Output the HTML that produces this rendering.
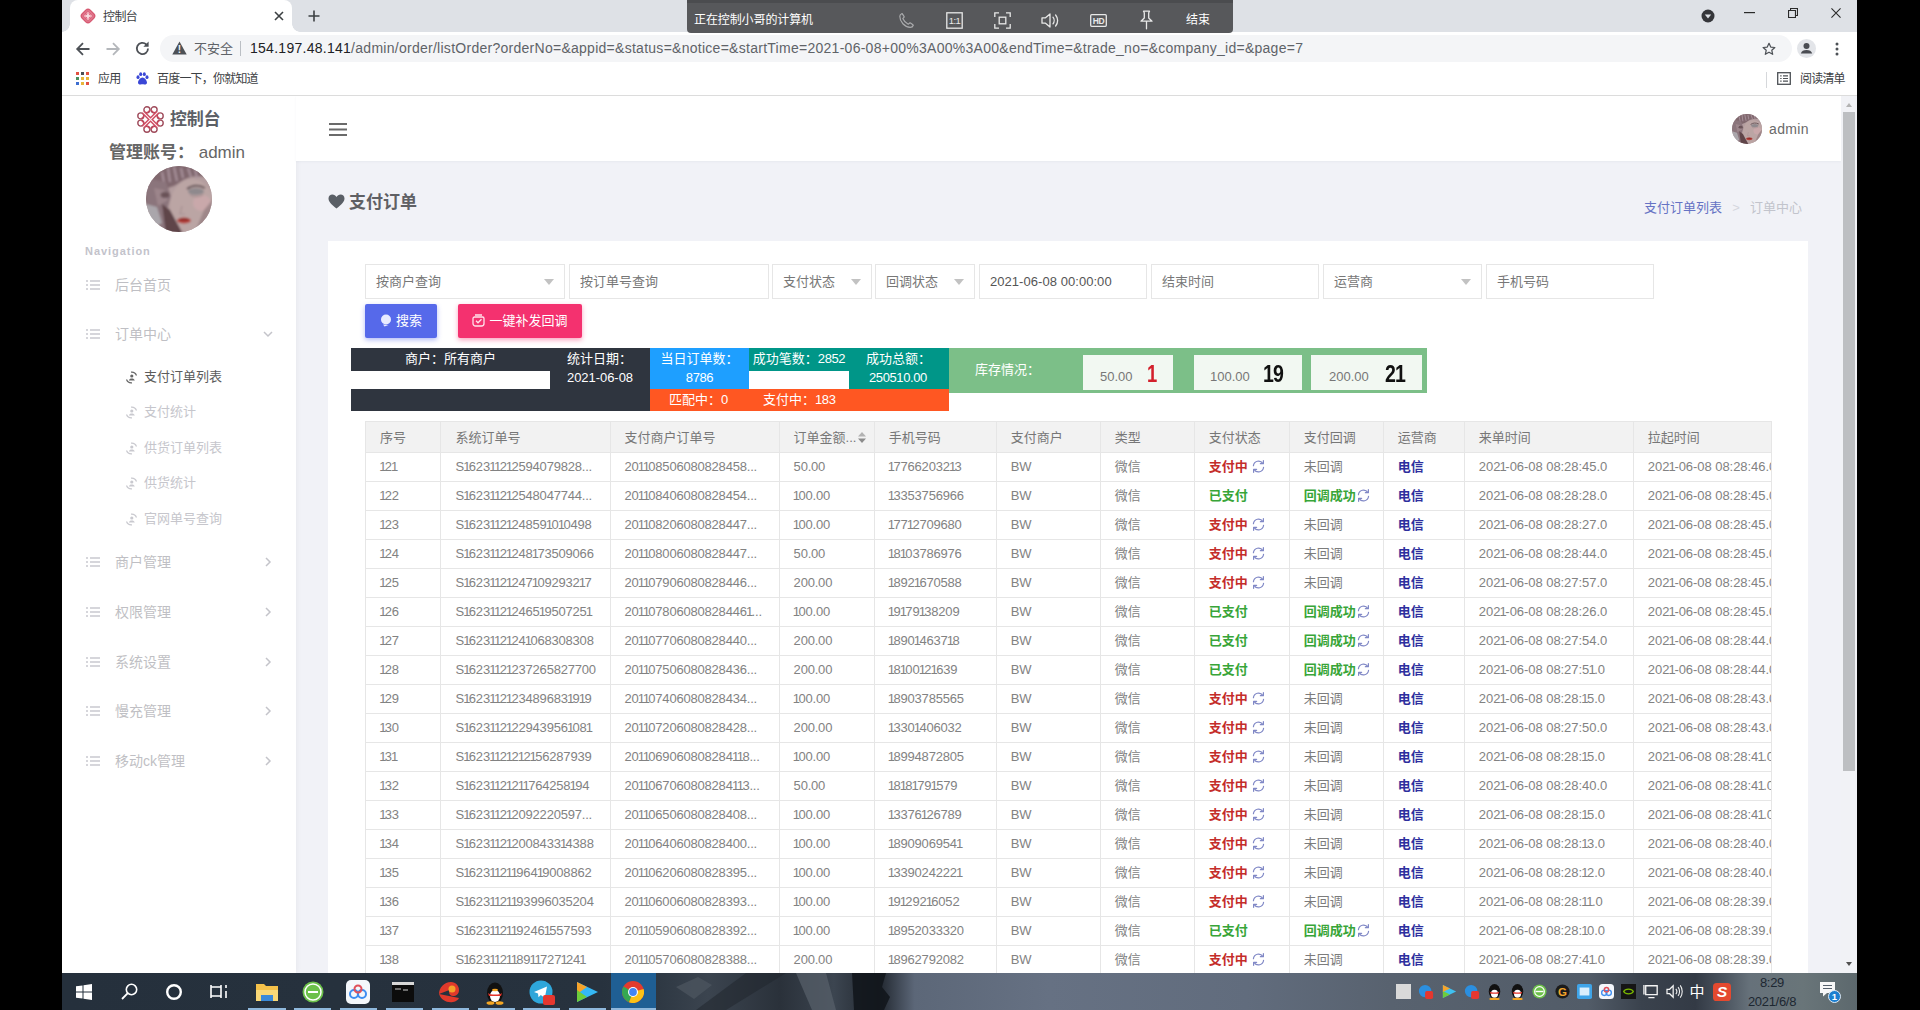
<!DOCTYPE html>
<html lang="zh-CN">
<head>
<meta charset="utf-8">
<title>控制台</title>
<style>
*{box-sizing:border-box}
html,body{margin:0;padding:0;background:#000}
body{width:1920px;height:1010px;overflow:hidden;font-family:"Liberation Sans","Noto Sans CJK SC",sans-serif;font-size:13px;color:#666}
#root{position:relative;width:1920px;height:1010px;background:#000;overflow:hidden}
.abs{position:absolute}
svg{display:block}
/* ---------- browser chrome ---------- */
#tabstrip{position:absolute;left:62px;top:0;width:1795px;height:32px;background:#dee1e6}
#tab{position:absolute;left:8px;top:0;width:222px;height:32px;background:#fff;border-radius:8px 8px 0 0}
#tab .fav{position:absolute;left:18px;top:8px}
#tab:before,#tab:after{content:'';position:absolute;bottom:0;width:8px;height:8px}
#tab:before{left:-8px;background:radial-gradient(circle at 0 0,rgba(255,255,255,0) 7.500px,#fff 8px)}
#tab:after{right:-8px;background:radial-gradient(circle at 100% 0,rgba(255,255,255,0) 7.500px,#fff 8px)}
#tab .tt{position:absolute;left:33px;top:9px;font-size:12px;line-height:16px;color:#3c4043;letter-spacing:-.6px}
#tab .x{position:absolute;left:204px;top:9px}
#newtab{position:absolute;left:245px;top:9px}
#rc{position:absolute;z-index:5;left:687px;top:0;width:546px;height:33px;background:#57585b;border-radius:0 0 4px 4px;border-top:3px solid #4b4c4f;color:#fff}
#rc .t{position:absolute;left:7px;top:9px;font-size:12px;line-height:16px;letter-spacing:-.1px}
#rc .e{position:absolute;left:499px;top:9px;font-size:12px;line-height:16px}
#rc svg{position:absolute;margin-top:1px}
#wc svg{position:absolute}
#toolbar{position:absolute;left:62px;top:32px;width:1795px;height:33px;background:#fff}
#omni{position:absolute;left:98px;top:3px;width:1632px;height:27px;border-radius:14px;background:#f4f5f7}
#omni .ns{position:absolute;left:34px;top:5px;font-size:13px;line-height:17px;color:#5f6368}
#omni .sep{position:absolute;left:80px;top:6px;width:1px;height:15px;background:#bbbfc4}
#omni .url{position:absolute;left:90px;top:4px;font-size:14px;line-height:18px;color:#5f6368;white-space:nowrap;letter-spacing:.27px}
#omni .url b{font-weight:normal;color:#202124}
#toolbar svg{position:absolute}
#bm{position:absolute;left:62px;top:65px;width:1795px;height:31px;background:#fff;border-bottom:1px solid #dcdcdc;font-size:12px;color:#3c4043}
#bm span{position:absolute;top:6px;line-height:16px;white-space:nowrap;letter-spacing:-.8px}
#bm svg{position:absolute}
/* ---------- page ---------- */
#page{position:absolute;left:62px;top:96px;width:1779px;height:877px;background:#f1f2f7;overflow:hidden}
#side{position:absolute;left:0;top:0;width:234px;height:877px;background:#fff;box-shadow:0 0 6px rgba(0,0,0,.06)}
#side .brand{position:absolute;left:108px;top:12px;font-size:17px;line-height:24px;font-weight:bold;color:#5c6066;white-space:nowrap;letter-spacing:-.3px}
#side .logo{position:absolute;left:74px;top:9px}
#side .acct{position:absolute;left:-2px;top:45px;width:234px;text-align:center;font-size:17px;line-height:24px;color:#666;white-space:nowrap}
#side .acct b{font-weight:bold}
#side .av{position:absolute;left:84px;top:70px;width:66px;height:66px;border-radius:50%;overflow:hidden}
#side .nav{position:absolute;left:23px;top:148px;font-size:11px;line-height:14px;font-weight:bold;color:#c3c3cb;letter-spacing:.95px}
#side .mi{position:absolute;left:0;width:234px;height:20px;font-size:14px;line-height:20px;color:#bfbfc4}
#side .mi .ic{position:absolute;left:24px;top:5px}
#side .mi .tx{position:absolute;left:53px;top:0;white-space:nowrap}
#side .mi .ar{position:absolute;left:201px;top:5px}
#side .si{position:absolute;left:0;width:234px;height:18px;font-size:13px;line-height:18px;color:#c6c6cc}
#side .si .ic{position:absolute;left:63px;top:3px}
#side .si .tx{position:absolute;left:82px;top:0;white-space:nowrap}
#side .si.on{color:#5c5c5c}
#topbar{position:absolute;left:234px;top:0;width:1545px;height:65px;background:#fff;box-shadow:0 1px 2px rgba(120,125,140,.07)}
#topbar .hb{position:absolute;left:33px;top:27px}
#topbar .av{position:absolute;left:1436px;top:18px;width:30px;height:30px;border-radius:50%;overflow:hidden}
#topbar .nm{position:absolute;left:1473px;top:24px;font-size:14px;line-height:18px;color:#6a6a6a;letter-spacing:.35px}
#ttl{position:absolute;left:266px;top:95px;font-size:17px;line-height:24px;font-weight:bold;color:#5f6064;white-space:nowrap}
#ttl svg{display:inline-block;vertical-align:-1px;margin-right:4px}
#bc{position:absolute;left:1582px;top:103px;font-size:13px;line-height:18px;white-space:nowrap;color:#c2c4cc}
#bc .a{color:#6673c4}
#bc .s{display:inline-block;width:28px;text-align:center;color:#d5d7de}
#card{position:absolute;left:266px;top:145px;width:1480px;height:740px;background:#fff}
.fi{position:absolute;top:23px;height:35px;border:1px solid #e6e6e6;background:#fff;font-size:13px;line-height:33px;color:#777;padding-left:10px;white-space:nowrap;overflow:hidden}
.fi.v{color:#555}
.fi .dd{position:absolute;right:10px;top:14px;width:0;height:0;border:5px solid transparent;border-top:6px solid #c2c2c2}
.btn{position:absolute;top:63px;height:34px;border-radius:2px;color:#fff;font-size:13px;line-height:34px;text-align:center;white-space:nowrap;box-shadow:0 2px 4px rgba(0,0,0,.18)}
.btn svg{display:inline-block;vertical-align:-2px;margin-right:4px}
#st{position:absolute;left:23px;top:107px;width:1100px;height:64px;color:#fff;font-size:13px;line-height:18px}
#st div{position:absolute;white-space:nowrap}
#st .tc{text-align:center}
#tb{position:absolute;left:37px;top:180px;width:1407px;height:560px;overflow:hidden;border-left:1px solid #e6e6e6;border-top:1px solid #e6e6e6;border-right:1px solid #e6e6e6}
#tb table{border-collapse:collapse;table-layout:fixed;width:1437px}
#tb th{height:30px;background:#f2f2f2;font-weight:normal;text-align:left;padding:0 0 1px 14px;border-right:1px solid #e6e6e6;border-bottom:1px solid #e6e6e6;font-size:13px;color:#777;white-space:nowrap;overflow:hidden}
#tb td{height:29px;padding:0 0 2px 14px;border-right:1px solid #e6e6e6;border-bottom:1px solid #e6e6e6;white-space:nowrap;overflow:hidden;font-size:13px;color:#828282}
#tb td.n{letter-spacing:-.2px;padding-bottom:0}
#tb td.c1,#tb th:nth-child(2){padding-left:15px}
#tb td i{font-style:normal;margin:0 -1.4px 0 -.8px}
#tb td.c10,#tb td.c11{letter-spacing:-.05px}
#tb b.ing{color:#c42d2a}
#tb b.ok{color:#38a538}
#tb b.dx{color:#2e2f9e}
#tb .no{color:#7c7c7c}
#tb svg.rf{display:inline-block;vertical-align:-3px}
#sb{position:absolute;left:1841px;top:96px;width:16px;height:877px;background:#f1f2f6}
#sb .th{position:absolute;left:2px;top:16px;width:12px;height:659px;background:#bdbfc2}
#sb .u{position:absolute;left:5px;top:7px;width:0;height:0;border:3px solid transparent;border-bottom:4px solid #b3b3b3;border-top:0}
#sb .d{position:absolute;left:5px;top:866px;width:0;height:0;border:3px solid transparent;border-top:4px solid #505050;border-bottom:0}
/* ---------- taskbar ---------- */
#task{position:absolute;left:62px;top:973px;width:1795px;height:37px;overflow:hidden;background:linear-gradient(90deg,#25303c 0,#27323e 30%,#2d3742 33%,#3b444f 36%,#2a313a 40%,#3c4550 43%,#20262e 45.500%,#5c6778 47.500%,#667183 55%,#616c7d 66%,#58626f 74%,#525c68 85%,#3a424d 88%,#333a45 91%,#4b545f 92.600%,#66717a 94%,#697579 97%,#5c686d 100%)}
#task svg{position:absolute}
#task .ti{position:absolute;top:8px;width:22px;height:22px}
#task .ul{position:absolute;top:35px;height:2px;background:#8fb8dc}
#task .clk{position:absolute;left:1680px;top:1px;width:60px;text-align:center;color:#1d2731;font-size:13px;line-height:17px}

</style>
</head>
<body>
<div id="root">
<div id="tabstrip">
  <div id="tab">
    <svg class="fav" style="left:10px;top:8px" width="16" height="16" viewBox="0 0 16 16"><rect x="2.500" y="2.500" width="11" height="11" rx="3" transform="rotate(45 8 8)" fill="#f0aab6" stroke="#d75a72" stroke-width="1.500"/><path d="M5 5l6 6M11 5l-6 6M8 2.600L13.400 8 8 13.400 2.600 8z" stroke="#d9607a" stroke-width="1.100" fill="none"/><rect x="6.200" y="6.200" width="3.600" height="3.600" transform="rotate(45 8 8)" fill="#f8dde1"/></svg>
    <div class="tt">控制台</div>
    <svg class="x" style="left:204px;top:11px" width="10" height="10" viewBox="0 0 10 10"><path d="M1 1l8 8M9 1l-8 8" stroke="#3c4043" stroke-width="1.6" fill="none"/></svg>
  </div>
  <svg id="newtab" style="left:246px;top:10px" width="12" height="12" viewBox="0 0 12 12"><path d="M6 0.5v11M0.5 6h11" stroke="#3c4043" stroke-width="1.6" fill="none"/></svg>
  <div id="wc">
    <svg style="left:1639px;top:9px" width="14" height="14" viewBox="0 0 14 14"><circle cx="7" cy="7" r="6.5" fill="#35363a"/><path d="M3.8 5.6h6.4L7 9.4z" fill="#dee1e6"/></svg>
    <svg style="left:1682px;top:12px" width="11" height="2" viewBox="0 0 11 2"><rect width="11" height="1.2" fill="#2a2a2a"/></svg>
    <svg style="left:1726px;top:8px" width="10" height="10" viewBox="0 0 11 11"><path d="M0.6 2.8h7.6v7.6H0.6zM2.8 2.8V0.6h7.6v7.6H8.2" fill="none" stroke="#2a2a2a" stroke-width="1.2"/></svg>
    <svg style="left:1769px;top:8px" width="10" height="10" viewBox="0 0 11 11"><path d="M0.5 0.5l10 10M10.5 0.5l-10 10" stroke="#2a2a2a" stroke-width="1.2" fill="none"/></svg>
  </div>
</div>
<div id="rc">
  <div class="t">正在控制小哥的计算机</div>
  <svg style="left:211px;top:8px" width="17" height="17" viewBox="0 0 17 17"><path d="M4 1.5c1 1.2 1.8 2.3 2.3 3.4L4.8 6.6c1 2.4 2.9 4.5 5.4 5.6l1.8-1.4c1.1.6 2.2 1.4 3.3 2.400-.5 1.400-1.500 2.200-3 2.200C6.500 15 1.800 9.800 1.800 4.300c0-1.200.8-2.200 2.200-2.800z" fill="none" stroke="#a9aaac" stroke-width="1.2" stroke-linejoin="round"/></svg>
  <svg style="left:259px;top:8px" width="17" height="17" viewBox="0 0 17 17"><rect x="0.800" y="0.800" width="15.400" height="15.400" fill="none" stroke="#e8e8e8" stroke-width="1.300"/><text x="8.500" y="12" text-anchor="middle" font-size="9.500" letter-spacing="-0.500" fill="#e8e8e8" font-family="Liberation Sans, sans-serif">1:1</text></svg>
  <svg style="left:307px;top:8px" width="17" height="17" viewBox="0 0 17 17"><path d="M0.8 5V0.8H5M12 0.800h4.200V5M16.200 12v4.200H12M5 16.200H0.800V12" fill="none" stroke="#e8e8e8" stroke-width="1.3"/><rect x="5.200" y="5.200" width="6.600" height="6.600" fill="none" stroke="#e8e8e8" stroke-width="1.3"/></svg>
  <svg style="left:354px;top:8px" width="19" height="17" viewBox="0 0 19 17"><path d="M1 5.800h3.500L9 2v13l-4.500-3.800H1z" fill="none" stroke="#e8e8e8" stroke-width="1.3" stroke-linejoin="round"/><path d="M12 5.200c1.500 1.800 1.500 4.800 0 6.600M14.600 3c2.700 3.200 2.700 7.800 0 11" fill="none" stroke="#e8e8e8" stroke-width="1.300" stroke-linecap="round"/></svg>
  <svg style="left:403px;top:10px" width="17" height="13" viewBox="0 0 17 13"><rect x="0.700" y="0.700" width="15.600" height="11.600" rx="1" fill="none" stroke="#e8e8e8" stroke-width="1.300"/><text x="8.500" y="9.700" text-anchor="middle" font-size="8.500" font-weight="bold" letter-spacing="-0.300" fill="#e8e8e8" font-family="Liberation Sans, sans-serif">HD</text></svg>
  <svg style="left:452px;top:6px" width="15" height="20" viewBox="0 0 15 20"><path d="M4.500 1.200h6l-.8 1.500v5.300l3.300 3.200H2l3.300-3.200V2.700zM7.500 11.200v7.600" fill="none" stroke="#e8e8e8" stroke-width="1.300" stroke-linejoin="round" stroke-linecap="round"/></svg>
  <div class="e">结束</div>
</div>
<div id="toolbar">
  <svg style="left:13px;top:9px" width="16" height="16" viewBox="0 0 16 16"><path d="M14.500 8H2.500M8 2.200L2.200 8 8 13.800" fill="none" stroke="#4d5156" stroke-width="1.800"/></svg>
  <svg style="left:43px;top:9px" width="16" height="16" viewBox="0 0 16 16"><path d="M1.500 8h12M8 2.200L13.800 8 8 13.800" fill="none" stroke="#b4b7bb" stroke-width="1.800"/></svg>
  <svg style="left:72px;top:8px" width="17" height="17" viewBox="0 0 17 17"><path d="M14 8.500a5.600 5.600 0 1 1-1.700-4" fill="none" stroke="#4d5156" stroke-width="1.800"/><path d="M14.600 1.500v5.200H9.400z" fill="#4d5156"/></svg>
  <div id="omni">
    <svg style="left:12px;top:6px" width="15" height="14" viewBox="0 0 15 14"><path d="M7.500 0.500L14.700 13.500H0.300z" fill="#4d5156"/><text x="7.500" y="12.300" text-anchor="middle" font-size="10" font-weight="bold" fill="#f4f5f7" font-family="Liberation Sans, sans-serif">!</text></svg>
    <div class="ns">不安全</div>
    <div class="sep"></div>
    <div class="url"><b>154.197.48.141</b>/admin/order/listOrder?orderNo=&amp;appid=&amp;status=&amp;notice=&amp;startTime=2021-06-08+00%3A00%3A00&amp;endTime=&amp;trade_no=&amp;company_id=&amp;page=7</div>
    <svg style="left:1602px;top:7px" width="14" height="14" viewBox="0 0 16 16"><path d="M8 1.500l2 4.300 4.700.5-3.500 3.200 1 4.600L8 11.700l-4.200 2.400 1-4.600L1.300 6.300 6 5.800z" fill="none" stroke="#4d5156" stroke-width="1.400" stroke-linejoin="round"/></svg>
  </div>
  <svg style="left:1735px;top:7px" width="19" height="19" viewBox="0 0 19 19"><circle cx="9.500" cy="9.500" r="9.500" fill="#e3e5e9"/><circle cx="9.500" cy="7" r="3" fill="#4a4c52"/><path d="M3.800 14.500c.6-2.600 2.800-3.600 5.700-3.600s5.100 1 5.700 3.600z" fill="#4a4c52"/></svg>
  <svg style="left:1773px;top:10px" width="4" height="14" viewBox="0 0 4 14"><circle cx="2" cy="2" r="1.500" fill="#4d5156"/><circle cx="2" cy="7" r="1.500" fill="#4d5156"/><circle cx="2" cy="12" r="1.500" fill="#4d5156"/></svg>
</div>
<div id="bm">
  <svg style="left:14px;top:7px" width="13" height="13" viewBox="0 0 13 13"><g><rect x="0" y="0" width="3" height="3" fill="#e25141"/><rect x="5" y="0" width="3" height="3" fill="#4a4f55"/><rect x="10" y="0" width="3" height="3" fill="#e25141"/><rect x="0" y="5" width="3" height="3" fill="#4a8f5d"/><rect x="5" y="5" width="3" height="3" fill="#e8b63b"/><rect x="10" y="5" width="3" height="3" fill="#e8b63b"/><rect x="0" y="10" width="3" height="3" fill="#3f6fd0"/><rect x="5" y="10" width="3" height="3" fill="#e8b63b"/><rect x="10" y="10" width="3" height="3" fill="#e25141"/></g></svg>
  <span style="left:36px">应用</span>
  <svg style="left:74px;top:7px" width="13" height="13" viewBox="0 0 13 13"><g fill="#3a47d6"><ellipse cx="2" cy="5.200" rx="1.500" ry="1.900"/><ellipse cx="4.700" cy="2.200" rx="1.500" ry="1.900"/><ellipse cx="8.300" cy="2.200" rx="1.500" ry="1.900"/><ellipse cx="11" cy="5.200" rx="1.500" ry="1.900"/><path d="M6.500 5.500c2 0 4.500 3 4.500 5 0 1.600-1.400 2.200-2.600 2-1-.2-1.500-.3-1.900-.3s-.9.100-1.900.3c-1.200.2-2.600-.4-2.600-2 0-2 2.500-5 4.500-5z"/></g></svg>
  <span style="left:95px">百度一下，你就知道</span>
  <div class="abs" style="left:1704px;top:7px;width:1px;height:16px;background:#d6d8db"></div>
  <svg style="left:1715px;top:7px" width="14" height="13" viewBox="0 0 14 13"><rect x="0.700" y="0.700" width="12.600" height="11.600" fill="none" stroke="#4d5156" stroke-width="1.300"/><path d="M3.200 3.800h1.400M6 3.800h5M3.200 6.500h1.400M6 6.500h5M3.200 9.200h1.400M6 9.200h5" stroke="#4d5156" stroke-width="1.200"/></svg>
  <span style="left:1738px">阅读清单</span>
</div>

<div id="page">
<div id="side">
  <svg class="logo" style="left:75px;top:10px" width="27" height="27" viewBox="0 0 27 27"><g fill="none" stroke="#a04c5c" stroke-width="1.400"><circle cx="17.1" cy="3.8" r="3"/><circle cx="9.9" cy="3.8" r="3"/><circle cx="17.1" cy="23.2" r="3"/><circle cx="9.9" cy="23.2" r="3"/><circle cx="23.2" cy="17.1" r="3"/><circle cx="23.2" cy="9.9" r="3"/><circle cx="3.8" cy="17.1" r="3"/><circle cx="3.8" cy="9.9" r="3"/></g><path d="M14.1 4.1L22.9 12.9M4.1 14.1L12.9 22.9M4.1 12.9L12.9 4.1M14.1 22.9L22.9 14.1" fill="none" stroke="#cf4a60" stroke-width="1.300"/><path d="M6.1 6.1L20.9 20.9M6.1 20.9L20.9 6.1" fill="none" stroke="#cf4a60" stroke-width="3.800"/><path d="M6.1 6.1L20.9 20.9M6.1 20.9L20.9 6.1" fill="none" stroke="#fbeef0" stroke-width="1.100"/></svg>
  <div class="brand">控制台</div>
  <div class="acct"><b>管理账号：</b> admin</div>
  <div class="av"><svg width="66" height="66" viewBox="0 0 66 66"><defs><filter id="bl1" x="-10%" y="-10%" width="120%" height="120%"><feGaussianBlur stdDeviation="1.1"/></filter></defs><rect width="66" height="66" fill="#b09a9d"/><g filter="url(#bl1)"><rect x="-4" y="-4" width="74" height="74" fill="#b39d9f"/><ellipse cx="46" cy="40" rx="22" ry="27" fill="#bba5a4"/><ellipse cx="56" cy="37" rx="9" ry="8" fill="#c9a8aa"/><path d="M-2 -2h70v16c-8-4-18-5-26-2-6 2-10 6-14 8l-6 2-10 6-16 14z" fill="#80676e"/><path d="M22 2l2 14M28 1l3 14M35 2l2 10M42 2l3 9M49 3l2 9M16 6l3 16" stroke="#a8929c" stroke-width="2" fill="none"/><path d="M0 12l20 4 5 14-4 14 10 22H0z" fill="#8b747b"/><path d="M8 22l10 2 4 10-10 6z" fill="#9c858b"/><path d="M0 38l11 3 5 16-10 6-6-10z" fill="#aaa6ab"/><path d="M16 38l8 6 13 24H20z" fill="#5e454a"/><ellipse cx="19" cy="29" rx="4.500" ry="3" fill="#6a5359"/><ellipse cx="50" cy="25.500" rx="8" ry="3.600" fill="#8f898d"/><path d="M41 23c5-4 12-4 18-1" stroke="#5c4b50" stroke-width="1.800" fill="none"/><path d="M44 29c4 2 9 2 13 0" stroke="#a38c8e" stroke-width="1.200" fill="none"/><path d="M36 40l-2 8h5" stroke="#a89293" stroke-width="1.200" fill="none"/><ellipse cx="38" cy="54.500" rx="7" ry="3" fill="#b5413b"/><ellipse cx="38" cy="53.500" rx="5" ry="1.300" fill="#8e2f2c"/><path d="M58 44l10-12v36H48z" fill="#927a7e" opacity=".7"/></g></svg></div>
  <div class="nav">Navigation</div>

  <div class="mi" style="top:179px"><svg class="ic" width="14" height="10" viewBox="0 0 14 10"><path d="M0 1h2M4 1h10M0 5h2M4 5h10M0 9h2M4 9h10" stroke="#c9c9cf" stroke-width="1.300"/></svg><span class="tx">后台首页</span></div>
  <div class="mi" style="top:228px"><svg class="ic" width="14" height="10" viewBox="0 0 14 10"><path d="M0 1h2M4 1h10M0 5h2M4 5h10M0 9h2M4 9h10" stroke="#c9c9cf" stroke-width="1.300"/></svg><span class="tx">订单中心</span><svg class="ar" style="top:7px" width="10" height="7" viewBox="0 0 10 7"><path d="M1 1l4 4 4-4" fill="none" stroke="#c4c4ca" stroke-width="1.500"/></svg></div>

  <div class="si on" style="top:272px"><svg class="ic" width="13" height="13" viewBox="0 0 13 13"><path d="M11.500 4.500A5.300 5.300 0 0 0 6 1.200M1.500 8.500A5.300 5.300 0 0 0 7 11.800" fill="none" stroke="#666" stroke-width="1.200"/><circle cx="6.800" cy="5" r="1.600" fill="#666"/><path d="M3.800 9.600c.4-1.600 1.500-2.200 3-2.200s2.600.6 3 2.200z" fill="#666"/></svg><span class="tx">支付订单列表</span></div>
  <div class="si" style="top:307px"><svg class="ic" width="13" height="13" viewBox="0 0 13 13"><path d="M11.500 4.500A5.300 5.300 0 0 0 6 1.200M1.500 8.500A5.300 5.300 0 0 0 7 11.800" fill="none" stroke="#c9c9cf" stroke-width="1.200"/><circle cx="6.800" cy="5" r="1.600" fill="#c9c9cf"/><path d="M3.800 9.600c.4-1.600 1.500-2.200 3-2.200s2.600.6 3 2.200z" fill="#c9c9cf"/></svg><span class="tx">支付统计</span></div>
  <div class="si" style="top:343px"><svg class="ic" width="13" height="13" viewBox="0 0 13 13"><path d="M11.500 4.500A5.300 5.300 0 0 0 6 1.200M1.500 8.500A5.300 5.300 0 0 0 7 11.800" fill="none" stroke="#c9c9cf" stroke-width="1.200"/><circle cx="6.800" cy="5" r="1.600" fill="#c9c9cf"/><path d="M3.800 9.600c.4-1.600 1.500-2.200 3-2.200s2.600.6 3 2.200z" fill="#c9c9cf"/></svg><span class="tx">供货订单列表</span></div>
  <div class="si" style="top:378px"><svg class="ic" width="13" height="13" viewBox="0 0 13 13"><path d="M11.500 4.500A5.300 5.300 0 0 0 6 1.200M1.500 8.500A5.300 5.300 0 0 0 7 11.800" fill="none" stroke="#c9c9cf" stroke-width="1.200"/><circle cx="6.800" cy="5" r="1.600" fill="#c9c9cf"/><path d="M3.800 9.600c.4-1.600 1.500-2.200 3-2.200s2.600.6 3 2.200z" fill="#c9c9cf"/></svg><span class="tx">供货统计</span></div>
  <div class="si" style="top:414px"><svg class="ic" width="13" height="13" viewBox="0 0 13 13"><path d="M11.500 4.500A5.300 5.300 0 0 0 6 1.200M1.500 8.500A5.300 5.300 0 0 0 7 11.800" fill="none" stroke="#c9c9cf" stroke-width="1.200"/><circle cx="6.800" cy="5" r="1.600" fill="#c9c9cf"/><path d="M3.800 9.600c.4-1.600 1.500-2.200 3-2.200s2.600.6 3 2.200z" fill="#c9c9cf"/></svg><span class="tx">官网单号查询</span></div>

  <div class="mi" style="top:456px"><svg class="ic" width="14" height="10" viewBox="0 0 14 10"><path d="M0 1h2M4 1h10M0 5h2M4 5h10M0 9h2M4 9h10" stroke="#c9c9cf" stroke-width="1.300"/></svg><span class="tx">商户管理</span><svg class="ar" style="left:203px" width="7" height="10" viewBox="0 0 7 10"><path d="M1 1l4 4-4 4" fill="none" stroke="#c4c4ca" stroke-width="1.500"/></svg></div>
  <div class="mi" style="top:506px"><svg class="ic" width="14" height="10" viewBox="0 0 14 10"><path d="M0 1h2M4 1h10M0 5h2M4 5h10M0 9h2M4 9h10" stroke="#c9c9cf" stroke-width="1.300"/></svg><span class="tx">权限管理</span><svg class="ar" style="left:203px" width="7" height="10" viewBox="0 0 7 10"><path d="M1 1l4 4-4 4" fill="none" stroke="#c4c4ca" stroke-width="1.500"/></svg></div>
  <div class="mi" style="top:556px"><svg class="ic" width="14" height="10" viewBox="0 0 14 10"><path d="M0 1h2M4 1h10M0 5h2M4 5h10M0 9h2M4 9h10" stroke="#c9c9cf" stroke-width="1.300"/></svg><span class="tx">系统设置</span><svg class="ar" style="left:203px" width="7" height="10" viewBox="0 0 7 10"><path d="M1 1l4 4-4 4" fill="none" stroke="#c4c4ca" stroke-width="1.500"/></svg></div>
  <div class="mi" style="top:605px"><svg class="ic" width="14" height="10" viewBox="0 0 14 10"><path d="M0 1h2M4 1h10M0 5h2M4 5h10M0 9h2M4 9h10" stroke="#c9c9cf" stroke-width="1.300"/></svg><span class="tx">慢充管理</span><svg class="ar" style="left:203px" width="7" height="10" viewBox="0 0 7 10"><path d="M1 1l4 4-4 4" fill="none" stroke="#c4c4ca" stroke-width="1.500"/></svg></div>
  <div class="mi" style="top:655px"><svg class="ic" width="14" height="10" viewBox="0 0 14 10"><path d="M0 1h2M4 1h10M0 5h2M4 5h10M0 9h2M4 9h10" stroke="#c9c9cf" stroke-width="1.300"/></svg><span class="tx">移动ck管理</span><svg class="ar" style="left:203px" width="7" height="10" viewBox="0 0 7 10"><path d="M1 1l4 4-4 4" fill="none" stroke="#c4c4ca" stroke-width="1.500"/></svg></div>
</div>

<div id="topbar">
  <svg class="hb" width="18" height="13" viewBox="0 0 18 13"><path d="M0 1h18M0 6.500h18M0 12h18" stroke="#6a6a6a" stroke-width="1.800"/></svg>
  <div class="av"><svg width="30" height="30" viewBox="0 0 66 66"><defs><filter id="bl2" x="-10%" y="-10%" width="120%" height="120%"><feGaussianBlur stdDeviation="1.1"/></filter></defs><rect width="66" height="66" fill="#b09a9d"/><g filter="url(#bl2)"><rect x="-4" y="-4" width="74" height="74" fill="#b39d9f"/><ellipse cx="46" cy="40" rx="22" ry="27" fill="#bba5a4"/><ellipse cx="56" cy="37" rx="9" ry="8" fill="#c9a8aa"/><path d="M-2 -2h70v16c-8-4-18-5-26-2-6 2-10 6-14 8l-6 2-10 6-16 14z" fill="#80676e"/><path d="M22 2l2 14M28 1l3 14M35 2l2 10M42 2l3 9M49 3l2 9M16 6l3 16" stroke="#a8929c" stroke-width="2" fill="none"/><path d="M0 12l20 4 5 14-4 14 10 22H0z" fill="#8b747b"/><path d="M8 22l10 2 4 10-10 6z" fill="#9c858b"/><path d="M0 38l11 3 5 16-10 6-6-10z" fill="#aaa6ab"/><path d="M16 38l8 6 13 24H20z" fill="#5e454a"/><ellipse cx="19" cy="29" rx="4.500" ry="3" fill="#6a5359"/><ellipse cx="50" cy="25.500" rx="8" ry="3.600" fill="#8f898d"/><path d="M41 23c5-4 12-4 18-1" stroke="#5c4b50" stroke-width="1.800" fill="none"/><path d="M44 29c4 2 9 2 13 0" stroke="#a38c8e" stroke-width="1.200" fill="none"/><path d="M36 40l-2 8h5" stroke="#a89293" stroke-width="1.200" fill="none"/><ellipse cx="38" cy="54.500" rx="7" ry="3" fill="#b5413b"/><ellipse cx="38" cy="53.500" rx="5" ry="1.300" fill="#8e2f2c"/><path d="M58 44l10-12v36H48z" fill="#927a7e" opacity=".7"/></g></svg></div>
  <div class="nm">admin</div>
</div>
<div id="ttl"><svg width="17" height="15" viewBox="0 0 17 15"><path d="M8.500 14.500C3 10 0.500 7.500 0.500 4.500 0.500 2 2.300 0.500 4.400 0.500c1.700 0 3.200 1 4.100 2.400C9.400 1.500 10.900 0.500 12.600 0.500c2.100 0 3.900 1.500 3.900 4 0 3-2.500 5.500-8 10z" fill="#5a5f66"/></svg>支付订单</div>
<div id="bc"><span class="a">支付订单列表</span><span class="s">&gt;</span>订单中心</div>
<div id="card">
  <div class="fi" style="left:37px;width:200px">按商户查询<i class="dd"></i></div>
  <div class="fi" style="left:241px;width:200px">按订单号查询</div>
  <div class="fi" style="left:444px;width:100px">支付状态<i class="dd"></i></div>
  <div class="fi" style="left:547px;width:100px">回调状态<i class="dd"></i></div>
  <div class="fi v" style="left:651px;width:168px;letter-spacing:.05px">2021-06-08 00:00:00</div>
  <div class="fi" style="left:823px;width:168px">结束时间</div>
  <div class="fi" style="left:995px;width:159px">运营商<i class="dd"></i></div>
  <div class="fi" style="left:1158px;width:168px">手机号码</div>

  <div class="btn" style="left:37px;width:72px;background:#5669ea;box-shadow:0 2px 5px rgba(86,105,234,.45)"><svg width="12" height="13" viewBox="0 0 12 13"><circle cx="6" cy="5.500" r="5" fill="#e8ebff"/><path d="M3 10.500l1.500 2 4-1.500z" fill="#e8ebff"/></svg>搜索</div>
  <div class="btn" style="left:130px;width:124px;background:#f4316f;box-shadow:0 2px 5px rgba(244,49,111,.45)"><svg width="13" height="13" viewBox="0 0 13 13"><path d="M2.500 3h8c.8 0 1.500.7 1.500 1.500v5c0 1.400-1.100 2.500-2.500 2.500h-6C2.100 12 1 10.900 1 9.500v-5C1 3.700 1.700 3 2.500 3zM4 6.800l2 2 3.500-3.500M3 1h7" fill="none" stroke="#ffe3ec" stroke-width="1.300"/></svg>一键补发回调</div>

  <div id="st">
    <div style="left:0;top:0;width:299px;height:63px;background:#2f353f"></div>
    <div style="left:0;top:23px;width:199px;height:18px;background:#fff"></div>
    <div class="tc" style="left:0;top:2px;width:199px">商户：所有商户</div>
    <div style="left:216px;top:2px">统计日期：</div>
    <div style="left:216px;top:21px;letter-spacing:-.05px">2021-06-08</div>
    <div style="left:299px;top:0;width:99px;height:41px;background:#1e9fff"></div>
    <div class="tc" style="left:299px;top:2px;width:99px">当日订单数：</div>
    <div class="tc" style="left:299px;top:21px;width:99px;letter-spacing:-.4px">8786</div>
    <div style="left:398px;top:0;width:200px;height:41px;background:#009688"></div>
    <div style="left:398px;top:23px;width:100px;height:18px;background:#fff"></div>
    <div class="tc" style="left:398px;top:2px;width:100px">成功笔数：<span style="letter-spacing:-.4px">2852</span></div>
    <div style="left:515px;top:2px">成功总额：</div>
    <div style="left:518px;top:21px;letter-spacing:-.4px">250510.00</div>
    <div style="left:299px;top:41px;width:299px;height:22px;background:#ff5722"></div>
    <div style="left:318px;top:43px">匹配中：0</div>
    <div style="left:412px;top:43px">支付中：<span style="letter-spacing:-.4px">183</span></div>
    <div style="left:598px;top:0;width:478px;height:45px;background:#7cbf88"></div>
    <div style="left:624px;top:13px">库存情况：</div>
    <div style="left:732px;top:7px;width:90px;height:35px;background:#f2f8f2"></div>
    <div style="left:843px;top:7px;width:108px;height:35px;background:#f2f8f2"></div>
    <div style="left:960px;top:7px;width:111px;height:35px;background:#f2f8f2"></div>
    <div style="left:749px;top:20px;color:#777;letter-spacing:0">50.00</div>
    <div style="left:796px;top:13px;color:#d3202c;font-size:23px;line-height:26px;font-weight:bold;transform:scaleX(.8);transform-origin:0 0">1</div>
    <div style="left:859px;top:20px;color:#777;letter-spacing:0">100.00</div>
    <div style="left:912px;top:13px;color:#111;font-size:23px;line-height:26px;font-weight:bold;letter-spacing:-1px;transform:scaleX(.85);transform-origin:0 0">19</div>
    <div style="left:978px;top:20px;color:#777;letter-spacing:0">200.00</div>
    <div style="left:1034px;top:13px;color:#111;font-size:23px;line-height:26px;font-weight:bold;letter-spacing:-1px;transform:scaleX(.85);transform-origin:0 0">21</div>
  </div>

  <div id="tb">
    <table>
      <colgroup><col style="width:74px"><col style="width:170px"><col style="width:169px"><col style="width:95px"><col style="width:122px"><col style="width:104px"><col style="width:94px"><col style="width:95px"><col style="width:94px"><col style="width:81px"><col style="width:169px"><col style="width:169px"></colgroup>
      <thead><tr><th>序号</th><th>系统订单号</th><th>支付商户订单号</th><th>订单金额...<svg style="display:inline-block;vertical-align:-1px;margin-left:2px" width="8" height="11" viewBox="0 0 8 11"><path d="M4 0l4 4.500H0z" fill="#b2b2b2"/><path d="M4 11L0 6.500h8z" fill="#8c8c8c"/></svg></th><th>手机号码</th><th>支付商户</th><th>类型</th><th>支付状态</th><th>支付回调</th><th>运营商</th><th>来单时间</th><th>拉起时间</th></tr></thead>
      <tbody>
<tr><td class="n c0"><i>1</i>2<i>1</i></td><td class="n c1">S<i>1</i>623<i>1</i><i>1</i>2<i>1</i>2594079828...</td><td class="n c2">20<i>1</i><i>1</i>08506080828458...</td><td class="n c3">50.00</td><td class="n c4"><i>1</i>77662032<i>1</i>3</td><td class="n c5">BW</td><td class="z">微信</td><td class="z"><b class="ing">支付中</b> <svg class="rf" viewBox="0 0 16 16" width="15" height="15"><path d="M2.6 7.2A5.5 5.5 0 0 1 12.6 4.6M13.4 8.8A5.5 5.5 0 0 1 3.4 11.4" fill="none" stroke="#8088c6" stroke-width="1.3" stroke-linecap="round"/><path d="M13.2 1.8v3.2H10M2.8 14.2V11H6" fill="none" stroke="#8088c6" stroke-width="1.3" stroke-linecap="round" stroke-linejoin="round"/></svg></td><td class="z"><span class="no">未回调</span></td><td class="z"><b class="dx">电信</b></td><td class="n c10">202<i>1</i>-06-08 08:28:45.0</td><td class="n c11">202<i>1</i>-06-08 08:28:46.0</td></tr>
<tr><td class="n c0"><i>1</i>22</td><td class="n c1">S<i>1</i>623<i>1</i><i>1</i>2<i>1</i>2548047744...</td><td class="n c2">20<i>1</i><i>1</i>08406080828454...</td><td class="n c3"><i>1</i>00.00</td><td class="n c4"><i>1</i>3353756966</td><td class="n c5">BW</td><td class="z">微信</td><td class="z"><b class="ok">已支付</b></td><td class="z"><b class="ok">回调成功</b><svg class="rf" viewBox="0 0 16 16" width="15" height="15"><path d="M2.6 7.2A5.5 5.5 0 0 1 12.6 4.6M13.4 8.8A5.5 5.5 0 0 1 3.4 11.4" fill="none" stroke="#8088c6" stroke-width="1.3" stroke-linecap="round"/><path d="M13.2 1.8v3.2H10M2.8 14.2V11H6" fill="none" stroke="#8088c6" stroke-width="1.3" stroke-linecap="round" stroke-linejoin="round"/></svg></td><td class="z"><b class="dx">电信</b></td><td class="n c10">202<i>1</i>-06-08 08:28:28.0</td><td class="n c11">202<i>1</i>-06-08 08:28:45.0</td></tr>
<tr><td class="n c0"><i>1</i>23</td><td class="n c1">S<i>1</i>623<i>1</i><i>1</i>2<i>1</i>24859<i>1</i>0<i>1</i>0498</td><td class="n c2">20<i>1</i><i>1</i>08206080828447...</td><td class="n c3"><i>1</i>00.00</td><td class="n c4"><i>1</i>77<i>1</i>2709680</td><td class="n c5">BW</td><td class="z">微信</td><td class="z"><b class="ing">支付中</b> <svg class="rf" viewBox="0 0 16 16" width="15" height="15"><path d="M2.6 7.2A5.5 5.5 0 0 1 12.6 4.6M13.4 8.8A5.5 5.5 0 0 1 3.4 11.4" fill="none" stroke="#8088c6" stroke-width="1.3" stroke-linecap="round"/><path d="M13.2 1.8v3.2H10M2.8 14.2V11H6" fill="none" stroke="#8088c6" stroke-width="1.3" stroke-linecap="round" stroke-linejoin="round"/></svg></td><td class="z"><span class="no">未回调</span></td><td class="z"><b class="dx">电信</b></td><td class="n c10">202<i>1</i>-06-08 08:28:27.0</td><td class="n c11">202<i>1</i>-06-08 08:28:45.0</td></tr>
<tr><td class="n c0"><i>1</i>24</td><td class="n c1">S<i>1</i>623<i>1</i><i>1</i>2<i>1</i>248<i>1</i>73509066</td><td class="n c2">20<i>1</i><i>1</i>08006080828447...</td><td class="n c3">50.00</td><td class="n c4"><i>1</i>8<i>1</i>03786976</td><td class="n c5">BW</td><td class="z">微信</td><td class="z"><b class="ing">支付中</b> <svg class="rf" viewBox="0 0 16 16" width="15" height="15"><path d="M2.6 7.2A5.5 5.5 0 0 1 12.6 4.6M13.4 8.8A5.5 5.5 0 0 1 3.4 11.4" fill="none" stroke="#8088c6" stroke-width="1.3" stroke-linecap="round"/><path d="M13.2 1.8v3.2H10M2.8 14.2V11H6" fill="none" stroke="#8088c6" stroke-width="1.3" stroke-linecap="round" stroke-linejoin="round"/></svg></td><td class="z"><span class="no">未回调</span></td><td class="z"><b class="dx">电信</b></td><td class="n c10">202<i>1</i>-06-08 08:28:44.0</td><td class="n c11">202<i>1</i>-06-08 08:28:45.0</td></tr>
<tr><td class="n c0"><i>1</i>25</td><td class="n c1">S<i>1</i>623<i>1</i><i>1</i>2<i>1</i>247<i>1</i>092932<i>1</i>7</td><td class="n c2">20<i>1</i><i>1</i>07906080828446...</td><td class="n c3">200.00</td><td class="n c4"><i>1</i>892<i>1</i>670588</td><td class="n c5">BW</td><td class="z">微信</td><td class="z"><b class="ing">支付中</b> <svg class="rf" viewBox="0 0 16 16" width="15" height="15"><path d="M2.6 7.2A5.5 5.5 0 0 1 12.6 4.6M13.4 8.8A5.5 5.5 0 0 1 3.4 11.4" fill="none" stroke="#8088c6" stroke-width="1.3" stroke-linecap="round"/><path d="M13.2 1.8v3.2H10M2.8 14.2V11H6" fill="none" stroke="#8088c6" stroke-width="1.3" stroke-linecap="round" stroke-linejoin="round"/></svg></td><td class="z"><span class="no">未回调</span></td><td class="z"><b class="dx">电信</b></td><td class="n c10">202<i>1</i>-06-08 08:27:57.0</td><td class="n c11">202<i>1</i>-06-08 08:28:45.0</td></tr>
<tr><td class="n c0"><i>1</i>26</td><td class="n c1">S<i>1</i>623<i>1</i><i>1</i>2<i>1</i>2465<i>1</i>950725<i>1</i></td><td class="n c2">20<i>1</i><i>1</i>07806080828446<i>1</i>...</td><td class="n c3"><i>1</i>00.00</td><td class="n c4"><i>1</i>9<i>1</i>79<i>1</i>38209</td><td class="n c5">BW</td><td class="z">微信</td><td class="z"><b class="ok">已支付</b></td><td class="z"><b class="ok">回调成功</b><svg class="rf" viewBox="0 0 16 16" width="15" height="15"><path d="M2.6 7.2A5.5 5.5 0 0 1 12.6 4.6M13.4 8.8A5.5 5.5 0 0 1 3.4 11.4" fill="none" stroke="#8088c6" stroke-width="1.3" stroke-linecap="round"/><path d="M13.2 1.8v3.2H10M2.8 14.2V11H6" fill="none" stroke="#8088c6" stroke-width="1.3" stroke-linecap="round" stroke-linejoin="round"/></svg></td><td class="z"><b class="dx">电信</b></td><td class="n c10">202<i>1</i>-06-08 08:28:26.0</td><td class="n c11">202<i>1</i>-06-08 08:28:45.0</td></tr>
<tr><td class="n c0"><i>1</i>27</td><td class="n c1">S<i>1</i>623<i>1</i><i>1</i>2<i>1</i>24<i>1</i>068308308</td><td class="n c2">20<i>1</i><i>1</i>07706080828440...</td><td class="n c3">200.00</td><td class="n c4"><i>1</i>890<i>1</i>4637<i>1</i>8</td><td class="n c5">BW</td><td class="z">微信</td><td class="z"><b class="ok">已支付</b></td><td class="z"><b class="ok">回调成功</b><svg class="rf" viewBox="0 0 16 16" width="15" height="15"><path d="M2.6 7.2A5.5 5.5 0 0 1 12.6 4.6M13.4 8.8A5.5 5.5 0 0 1 3.4 11.4" fill="none" stroke="#8088c6" stroke-width="1.3" stroke-linecap="round"/><path d="M13.2 1.8v3.2H10M2.8 14.2V11H6" fill="none" stroke="#8088c6" stroke-width="1.3" stroke-linecap="round" stroke-linejoin="round"/></svg></td><td class="z"><b class="dx">电信</b></td><td class="n c10">202<i>1</i>-06-08 08:27:54.0</td><td class="n c11">202<i>1</i>-06-08 08:28:44.0</td></tr>
<tr><td class="n c0"><i>1</i>28</td><td class="n c1">S<i>1</i>623<i>1</i><i>1</i>2<i>1</i>237265827700</td><td class="n c2">20<i>1</i><i>1</i>07506080828436...</td><td class="n c3">200.00</td><td class="n c4"><i>1</i>8<i>1</i>00<i>1</i>2<i>1</i>639</td><td class="n c5">BW</td><td class="z">微信</td><td class="z"><b class="ok">已支付</b></td><td class="z"><b class="ok">回调成功</b><svg class="rf" viewBox="0 0 16 16" width="15" height="15"><path d="M2.6 7.2A5.5 5.5 0 0 1 12.6 4.6M13.4 8.8A5.5 5.5 0 0 1 3.4 11.4" fill="none" stroke="#8088c6" stroke-width="1.3" stroke-linecap="round"/><path d="M13.2 1.8v3.2H10M2.8 14.2V11H6" fill="none" stroke="#8088c6" stroke-width="1.3" stroke-linecap="round" stroke-linejoin="round"/></svg></td><td class="z"><b class="dx">电信</b></td><td class="n c10">202<i>1</i>-06-08 08:27:5<i>1</i>.0</td><td class="n c11">202<i>1</i>-06-08 08:28:44.0</td></tr>
<tr><td class="n c0"><i>1</i>29</td><td class="n c1">S<i>1</i>623<i>1</i><i>1</i>2<i>1</i>23489683<i>1</i>9<i>1</i>9</td><td class="n c2">20<i>1</i><i>1</i>07406080828434...</td><td class="n c3"><i>1</i>00.00</td><td class="n c4"><i>1</i>8903785565</td><td class="n c5">BW</td><td class="z">微信</td><td class="z"><b class="ing">支付中</b> <svg class="rf" viewBox="0 0 16 16" width="15" height="15"><path d="M2.6 7.2A5.5 5.5 0 0 1 12.6 4.6M13.4 8.8A5.5 5.5 0 0 1 3.4 11.4" fill="none" stroke="#8088c6" stroke-width="1.3" stroke-linecap="round"/><path d="M13.2 1.8v3.2H10M2.8 14.2V11H6" fill="none" stroke="#8088c6" stroke-width="1.3" stroke-linecap="round" stroke-linejoin="round"/></svg></td><td class="z"><span class="no">未回调</span></td><td class="z"><b class="dx">电信</b></td><td class="n c10">202<i>1</i>-06-08 08:28:<i>1</i>5.0</td><td class="n c11">202<i>1</i>-06-08 08:28:43.0</td></tr>
<tr><td class="n c0"><i>1</i>30</td><td class="n c1">S<i>1</i>623<i>1</i><i>1</i>2<i>1</i>22943956<i>1</i>08<i>1</i></td><td class="n c2">20<i>1</i><i>1</i>07206080828428...</td><td class="n c3">200.00</td><td class="n c4"><i>1</i>330<i>1</i>406032</td><td class="n c5">BW</td><td class="z">微信</td><td class="z"><b class="ing">支付中</b> <svg class="rf" viewBox="0 0 16 16" width="15" height="15"><path d="M2.6 7.2A5.5 5.5 0 0 1 12.6 4.6M13.4 8.8A5.5 5.5 0 0 1 3.4 11.4" fill="none" stroke="#8088c6" stroke-width="1.3" stroke-linecap="round"/><path d="M13.2 1.8v3.2H10M2.8 14.2V11H6" fill="none" stroke="#8088c6" stroke-width="1.3" stroke-linecap="round" stroke-linejoin="round"/></svg></td><td class="z"><span class="no">未回调</span></td><td class="z"><b class="dx">电信</b></td><td class="n c10">202<i>1</i>-06-08 08:27:50.0</td><td class="n c11">202<i>1</i>-06-08 08:28:43.0</td></tr>
<tr><td class="n c0"><i>1</i>3<i>1</i></td><td class="n c1">S<i>1</i>623<i>1</i><i>1</i>2<i>1</i>2<i>1</i>2<i>1</i>56287939</td><td class="n c2">20<i>1</i><i>1</i>069060808284<i>1</i><i>1</i>8...</td><td class="n c3"><i>1</i>00.00</td><td class="n c4"><i>1</i>8994872805</td><td class="n c5">BW</td><td class="z">微信</td><td class="z"><b class="ing">支付中</b> <svg class="rf" viewBox="0 0 16 16" width="15" height="15"><path d="M2.6 7.2A5.5 5.5 0 0 1 12.6 4.6M13.4 8.8A5.5 5.5 0 0 1 3.4 11.4" fill="none" stroke="#8088c6" stroke-width="1.3" stroke-linecap="round"/><path d="M13.2 1.8v3.2H10M2.8 14.2V11H6" fill="none" stroke="#8088c6" stroke-width="1.3" stroke-linecap="round" stroke-linejoin="round"/></svg></td><td class="z"><span class="no">未回调</span></td><td class="z"><b class="dx">电信</b></td><td class="n c10">202<i>1</i>-06-08 08:28:<i>1</i>5.0</td><td class="n c11">202<i>1</i>-06-08 08:28:4<i>1</i>.0</td></tr>
<tr><td class="n c0"><i>1</i>32</td><td class="n c1">S<i>1</i>623<i>1</i><i>1</i>2<i>1</i>2<i>1</i><i>1</i>764258<i>1</i>94</td><td class="n c2">20<i>1</i><i>1</i>067060808284<i>1</i><i>1</i>3...</td><td class="n c3">50.00</td><td class="n c4"><i>1</i>8<i>1</i>8<i>1</i>79<i>1</i>579</td><td class="n c5">BW</td><td class="z">微信</td><td class="z"><b class="ing">支付中</b> <svg class="rf" viewBox="0 0 16 16" width="15" height="15"><path d="M2.6 7.2A5.5 5.5 0 0 1 12.6 4.6M13.4 8.8A5.5 5.5 0 0 1 3.4 11.4" fill="none" stroke="#8088c6" stroke-width="1.3" stroke-linecap="round"/><path d="M13.2 1.8v3.2H10M2.8 14.2V11H6" fill="none" stroke="#8088c6" stroke-width="1.3" stroke-linecap="round" stroke-linejoin="round"/></svg></td><td class="z"><span class="no">未回调</span></td><td class="z"><b class="dx">电信</b></td><td class="n c10">202<i>1</i>-06-08 08:28:40.0</td><td class="n c11">202<i>1</i>-06-08 08:28:4<i>1</i>.0</td></tr>
<tr><td class="n c0"><i>1</i>33</td><td class="n c1">S<i>1</i>623<i>1</i><i>1</i>2<i>1</i>2092220597...</td><td class="n c2">20<i>1</i><i>1</i>06506080828408...</td><td class="n c3"><i>1</i>00.00</td><td class="n c4"><i>1</i>3376<i>1</i>26789</td><td class="n c5">BW</td><td class="z">微信</td><td class="z"><b class="ing">支付中</b> <svg class="rf" viewBox="0 0 16 16" width="15" height="15"><path d="M2.6 7.2A5.5 5.5 0 0 1 12.6 4.6M13.4 8.8A5.5 5.5 0 0 1 3.4 11.4" fill="none" stroke="#8088c6" stroke-width="1.3" stroke-linecap="round"/><path d="M13.2 1.8v3.2H10M2.8 14.2V11H6" fill="none" stroke="#8088c6" stroke-width="1.3" stroke-linecap="round" stroke-linejoin="round"/></svg></td><td class="z"><span class="no">未回调</span></td><td class="z"><b class="dx">电信</b></td><td class="n c10">202<i>1</i>-06-08 08:28:<i>1</i>5.0</td><td class="n c11">202<i>1</i>-06-08 08:28:4<i>1</i>.0</td></tr>
<tr><td class="n c0"><i>1</i>34</td><td class="n c1">S<i>1</i>623<i>1</i><i>1</i>2<i>1</i>2008433<i>1</i>4388</td><td class="n c2">20<i>1</i><i>1</i>06406080828400...</td><td class="n c3"><i>1</i>00.00</td><td class="n c4"><i>1</i>890906954<i>1</i></td><td class="n c5">BW</td><td class="z">微信</td><td class="z"><b class="ing">支付中</b> <svg class="rf" viewBox="0 0 16 16" width="15" height="15"><path d="M2.6 7.2A5.5 5.5 0 0 1 12.6 4.6M13.4 8.8A5.5 5.5 0 0 1 3.4 11.4" fill="none" stroke="#8088c6" stroke-width="1.3" stroke-linecap="round"/><path d="M13.2 1.8v3.2H10M2.8 14.2V11H6" fill="none" stroke="#8088c6" stroke-width="1.3" stroke-linecap="round" stroke-linejoin="round"/></svg></td><td class="z"><span class="no">未回调</span></td><td class="z"><b class="dx">电信</b></td><td class="n c10">202<i>1</i>-06-08 08:28:<i>1</i>3.0</td><td class="n c11">202<i>1</i>-06-08 08:28:40.0</td></tr>
<tr><td class="n c0"><i>1</i>35</td><td class="n c1">S<i>1</i>623<i>1</i><i>1</i>2<i>1</i><i>1</i>964<i>1</i>9008862</td><td class="n c2">20<i>1</i><i>1</i>06206080828395...</td><td class="n c3"><i>1</i>00.00</td><td class="n c4"><i>1</i>339024222<i>1</i></td><td class="n c5">BW</td><td class="z">微信</td><td class="z"><b class="ing">支付中</b> <svg class="rf" viewBox="0 0 16 16" width="15" height="15"><path d="M2.6 7.2A5.5 5.5 0 0 1 12.6 4.6M13.4 8.8A5.5 5.5 0 0 1 3.4 11.4" fill="none" stroke="#8088c6" stroke-width="1.3" stroke-linecap="round"/><path d="M13.2 1.8v3.2H10M2.8 14.2V11H6" fill="none" stroke="#8088c6" stroke-width="1.3" stroke-linecap="round" stroke-linejoin="round"/></svg></td><td class="z"><span class="no">未回调</span></td><td class="z"><b class="dx">电信</b></td><td class="n c10">202<i>1</i>-06-08 08:28:<i>1</i>2.0</td><td class="n c11">202<i>1</i>-06-08 08:28:40.0</td></tr>
<tr><td class="n c0"><i>1</i>36</td><td class="n c1">S<i>1</i>623<i>1</i><i>1</i>2<i>1</i><i>1</i>93996035204</td><td class="n c2">20<i>1</i><i>1</i>06006080828393...</td><td class="n c3"><i>1</i>00.00</td><td class="n c4"><i>1</i>9<i>1</i>292<i>1</i>6052</td><td class="n c5">BW</td><td class="z">微信</td><td class="z"><b class="ing">支付中</b> <svg class="rf" viewBox="0 0 16 16" width="15" height="15"><path d="M2.6 7.2A5.5 5.5 0 0 1 12.6 4.6M13.4 8.8A5.5 5.5 0 0 1 3.4 11.4" fill="none" stroke="#8088c6" stroke-width="1.3" stroke-linecap="round"/><path d="M13.2 1.8v3.2H10M2.8 14.2V11H6" fill="none" stroke="#8088c6" stroke-width="1.3" stroke-linecap="round" stroke-linejoin="round"/></svg></td><td class="z"><span class="no">未回调</span></td><td class="z"><b class="dx">电信</b></td><td class="n c10">202<i>1</i>-06-08 08:28:<i>1</i><i>1</i>.0</td><td class="n c11">202<i>1</i>-06-08 08:28:39.0</td></tr>
<tr><td class="n c0"><i>1</i>37</td><td class="n c1">S<i>1</i>623<i>1</i><i>1</i>2<i>1</i><i>1</i>9246<i>1</i>557593</td><td class="n c2">20<i>1</i><i>1</i>05906080828392...</td><td class="n c3"><i>1</i>00.00</td><td class="n c4"><i>1</i>8952033320</td><td class="n c5">BW</td><td class="z">微信</td><td class="z"><b class="ok">已支付</b></td><td class="z"><b class="ok">回调成功</b><svg class="rf" viewBox="0 0 16 16" width="15" height="15"><path d="M2.6 7.2A5.5 5.5 0 0 1 12.6 4.6M13.4 8.8A5.5 5.5 0 0 1 3.4 11.4" fill="none" stroke="#8088c6" stroke-width="1.3" stroke-linecap="round"/><path d="M13.2 1.8v3.2H10M2.8 14.2V11H6" fill="none" stroke="#8088c6" stroke-width="1.3" stroke-linecap="round" stroke-linejoin="round"/></svg></td><td class="z"><b class="dx">电信</b></td><td class="n c10">202<i>1</i>-06-08 08:28:<i>1</i>0.0</td><td class="n c11">202<i>1</i>-06-08 08:28:39.0</td></tr>
<tr><td class="n c0"><i>1</i>38</td><td class="n c1">S<i>1</i>623<i>1</i><i>1</i>2<i>1</i><i>1</i>89<i>1</i><i>1</i>727<i>1</i>24<i>1</i></td><td class="n c2">20<i>1</i><i>1</i>05706080828388...</td><td class="n c3">200.00</td><td class="n c4"><i>1</i>8962792082</td><td class="n c5">BW</td><td class="z">微信</td><td class="z"><b class="ing">支付中</b> <svg class="rf" viewBox="0 0 16 16" width="15" height="15"><path d="M2.6 7.2A5.5 5.5 0 0 1 12.6 4.6M13.4 8.8A5.5 5.5 0 0 1 3.4 11.4" fill="none" stroke="#8088c6" stroke-width="1.3" stroke-linecap="round"/><path d="M13.2 1.8v3.2H10M2.8 14.2V11H6" fill="none" stroke="#8088c6" stroke-width="1.3" stroke-linecap="round" stroke-linejoin="round"/></svg></td><td class="z"><span class="no">未回调</span></td><td class="z"><b class="dx">电信</b></td><td class="n c10">202<i>1</i>-06-08 08:27:4<i>1</i>.0</td><td class="n c11">202<i>1</i>-06-08 08:28:39.0</td></tr>
      </tbody>
    </table>
  </div>
</div>
</div>
<div id="sb"><i class="u"></i><div class="th"></div><i class="d"></i></div>

<div id="task">
  <div class="abs" style="left:549px;top:0;width:45px;height:37px;background:#1f5f94"></div>
  <svg style="left:14px;top:11px" width="16" height="16" viewBox="0 0 16 16"><path d="M0 2.300l6.500-.9v6.100H0zM7.500 1.300L16 0v7.500H7.500zM0 8.500h6.500v6.100L0 13.700zM7.500 8.500H16V16l-8.500-1.300z" fill="#fff"/></svg>
  <svg style="left:59px;top:10px" width="17" height="17" viewBox="0 0 17 17"><circle cx="10.500" cy="6.500" r="5.200" fill="none" stroke="#fff" stroke-width="1.600"/><path d="M6.800 10.200L1 16" stroke="#fff" stroke-width="1.800"/></svg>
  <svg style="left:103px;top:10px" width="18" height="18" viewBox="0 0 18 18"><circle cx="9" cy="9" r="6.800" fill="none" stroke="#fff" stroke-width="2.400"/></svg>
  <svg style="left:148px;top:11px" width="18" height="15" viewBox="0 0 18 15"><path d="M1 1v13M1 3h10v9H1M11 1v13M16 1v3M16 7v7" fill="none" stroke="#fff" stroke-width="1.600"/></svg>
  <svg style="left:193px;top:9px" width="24" height="20" viewBox="0 0 24 20"><path d="M1 2h8l2 2h12v15H1z" fill="#f5c14a"/><rect x="1" y="8" width="22" height="11" fill="#f9d877"/><rect x="6" y="13" width="12" height="6" fill="#3b8ad9"/></svg>
  <svg style="left:240px;top:8px" width="22" height="22" viewBox="0 0 22 22"><circle cx="11" cy="11" r="10.500" fill="#6cc04a"/><circle cx="11" cy="11" r="8" fill="none" stroke="#fff" stroke-width="1.500"/><path d="M6 11h10" stroke="#fff" stroke-width="2"/></svg>
  <svg style="left:284px;top:7px" width="24" height="24" viewBox="0 0 24 24"><rect width="24" height="24" rx="5" fill="#f4f7fb"/><circle cx="8" cy="14" r="4" fill="none" stroke="#3d8df0" stroke-width="2"/><circle cx="16" cy="14" r="4" fill="none" stroke="#3d8df0" stroke-width="2"/><circle cx="12" cy="9" r="3.500" fill="none" stroke="#e0505a" stroke-width="2"/></svg>
  <svg style="left:330px;top:9px" width="22" height="20" viewBox="0 0 22 20"><rect width="22" height="20" fill="#0c0c0c"/><rect width="22" height="3" fill="#d8d8d8"/><path d="M3 7h6M11 8h5" stroke="#ccc" stroke-width="1.200"/></svg>
  <svg style="left:375px;top:7px" width="24" height="24" viewBox="0 0 24 24"><path d="M2 14c0-6 5-12 12-12 5 0 8 4 8 8s-3 6-6 6c-2 0-4-1.500-4-4 0-1.500 1-3 3-3M2 14c2 6 8 9 14 8 3-.5 5-2 6-4z" fill="#e0392b"/><circle cx="15" cy="9" r="3.500" fill="#f6a02a"/></svg>
  <svg style="left:422px;top:7px" width="22" height="25" viewBox="0 0 22 25"><ellipse cx="11" cy="13" rx="8" ry="10.500" fill="#111"/><ellipse cx="11" cy="16" rx="5" ry="6" fill="#fff"/><path d="M4 13c2 2 12 2 14 0l-1 3H5z" fill="#e2352c"/><ellipse cx="11" cy="10" rx="3" ry="1.300" fill="#f5a623"/><ellipse cx="6.500" cy="23" rx="4" ry="1.800" fill="#f5a623"/><ellipse cx="15.500" cy="23" rx="4" ry="1.800" fill="#f5a623"/></svg>
  <svg style="left:467px;top:7px" width="26" height="26" viewBox="0 0 26 26"><circle cx="12" cy="12" r="11.500" fill="#2ea6da"/><path d="M5 12l13-5.500-2.200 11.500-4-3-2.300 2.200-.5-3.700z" fill="#fff"/><rect x="14" y="15" width="12" height="10" rx="2" fill="#e5372f"/></svg>
  <svg style="left:513px;top:8px" width="24" height="22" viewBox="0 0 24 22"><path d="M2 1l21 10L2 21z" fill="#35b8f5"/><path d="M2 1l10 5L2 13z" fill="#f8a42a"/><path d="M2 21l10-5L2 9z" fill="#6dcd3b"/></svg>
  <svg style="left:560px;top:8px" width="22" height="22" viewBox="0 0 22 22"><circle cx="11" cy="11" r="11" fill="#e33b2e"/><path d="M11 11L1.500 5.500A11 11 0 0 0 7 21.200z" fill="#34a853"/><path d="M11 11l-4 10.200A11 11 0 0 0 21.600 8z" fill="#fbc116"/><circle cx="11" cy="11" r="5" fill="#fff"/><circle cx="11" cy="11" r="3.900" fill="#4285f4"/></svg>
  <div class="ul" style="left:186px;width:38px"></div>
  <div class="ul" style="left:232px;width:37px"></div>
  <div class="ul" style="left:278px;width:37px"></div>
  <div class="ul" style="left:324px;width:37px"></div>
  <div class="ul" style="left:370px;width:37px"></div>
  <div class="ul" style="left:416px;width:37px"></div>
  <div class="ul" style="left:461px;width:37px"></div>
  <div class="ul" style="left:507px;width:37px"></div>
  <div class="ul" style="left:549px;width:45px"></div>
  <!-- wallpaper silhouette -->
  <svg style="left:594px;top:0" width="300" height="37" viewBox="0 0 300 37"><path d="M20 14l22-10 14 8-18 14z" fill="#4b545e" opacity=".8"/><path d="M40 37L90 0h40L70 37z" fill="#20262e" opacity=".55"/><path d="M140 0h30l10 37h-24z" fill="#59616b" opacity=".7"/><path d="M196 0h34l-4 14 8 10-6 13h-30z" fill="#12161c" opacity=".9"/></svg>
  <!-- tray -->
  <svg style="left:1334px;top:11px" width="15" height="15" viewBox="0 0 17 17"><rect width="17" height="17" fill="#d9d9d9"/></svg>
  <svg style="left:1356px;top:11px" width="16" height="16" viewBox="0 0 18 18"><circle cx="8" cy="8" r="7" fill="#2b8fe0"/><rect x="8" y="8" width="9" height="9" rx="2" fill="#e5372f"/></svg>
  <svg style="left:1380px;top:11px" width="15" height="15" viewBox="0 0 17 17"><path d="M1 1l15 7.500L1 16z" fill="#3fc0f0"/><path d="M1 16l8-4-8-4z" fill="#6dcd3b"/><path d="M1 1l8 4-8 4z" fill="#f8a42a"/></svg>
  <svg style="left:1402px;top:11px" width="16" height="16" viewBox="0 0 18 18"><circle cx="8" cy="8" r="7" fill="#2b8fe0"/><rect x="8" y="8" width="9" height="9" rx="2" fill="#e5372f"/></svg>
  <svg style="left:1425px;top:10px" width="15" height="17" viewBox="0 0 17 19"><ellipse cx="8.500" cy="9.500" rx="6.500" ry="8.500" fill="#111"/><ellipse cx="8.500" cy="12" rx="4" ry="4.500" fill="#fff"/><path d="M3 9.500c2 1.500 9 1.500 11 0l-1 2.500H4z" fill="#e2352c"/><ellipse cx="8.500" cy="18" rx="6" ry="1.500" fill="#f5a623"/></svg>
  <svg style="left:1448px;top:10px" width="15" height="17" viewBox="0 0 17 19"><ellipse cx="8.500" cy="9.500" rx="6.500" ry="8.500" fill="#111"/><ellipse cx="8.500" cy="12" rx="4" ry="4.500" fill="#fff"/><path d="M3 9.500c2 1.500 9 1.500 11 0l-1 2.500H4z" fill="#e2352c"/><ellipse cx="8.500" cy="18" rx="6" ry="1.500" fill="#f5a623"/></svg>
  <svg style="left:1470px;top:11px" width="15" height="15" viewBox="0 0 17 17"><circle cx="8.500" cy="8.500" r="8" fill="#6cc04a"/><circle cx="8.500" cy="8.500" r="5.500" fill="none" stroke="#fff" stroke-width="1.300"/><path d="M4 8.500h9" stroke="#fff" stroke-width="1.600"/></svg>
  <svg style="left:1493px;top:11px" width="15" height="15" viewBox="0 0 17 17"><circle cx="8.500" cy="8.500" r="8" fill="#1b1b1b"/><text x="8.500" y="13.200" text-anchor="middle" font-size="13" font-weight="bold" fill="#f2a52c" font-family="Liberation Sans, sans-serif">G</text></svg>
  <svg style="left:1515px;top:11px" width="15" height="15" viewBox="0 0 17 17"><rect width="17" height="17" rx="2" fill="#3fa4e8"/><rect x="3" y="4" width="11" height="9" fill="#d9eefc"/></svg>
  <svg style="left:1537px;top:11px" width="15" height="15" viewBox="0 0 17 17"><rect width="17" height="17" rx="4" fill="#f4f7fb"/><circle cx="6" cy="10" r="3" fill="none" stroke="#3d8df0" stroke-width="1.500"/><circle cx="11" cy="10" r="3" fill="none" stroke="#3d8df0" stroke-width="1.500"/><circle cx="8.500" cy="6.500" r="2.500" fill="none" stroke="#e0505a" stroke-width="1.500"/></svg>
  <svg style="left:1559px;top:11px" width="15" height="15" viewBox="0 0 17 17"><rect width="17" height="17" fill="#151515"/><path d="M3 8.500c2-3.500 9-3.500 11 0-2 3.500-9 3.500-11 0z" fill="none" stroke="#7ab800" stroke-width="1.500"/></svg>
  <svg style="left:1581px;top:11px" width="16" height="15" viewBox="0 0 18 17"><path d="M3 2h13v10H3zM6 15.500h7M1 1v11" fill="none" stroke="#f4f4f4" stroke-width="1.500"/></svg>
  <svg style="left:1604px;top:11px" width="17" height="15" viewBox="0 0 19 17"><path d="M1 6h3l4-4v13l-4-4H1z" fill="none" stroke="#f4f4f4" stroke-width="1.400"/><path d="M11 5.500c1.300 1.600 1.300 4.400 0 6M13.500 3.500c2.300 2.800 2.300 7.200 0 10M16 1.500c3 4 3 10 0 14" fill="none" stroke="#f4f4f4" stroke-width="1.200"/></svg>
  <div class="abs" style="left:1626px;top:9px;width:18px;color:#fff;font-size:15px;line-height:19px;text-align:center">中</div>
  <svg style="left:1651px;top:10px" width="18" height="18" viewBox="0 0 20 20"><rect width="20" height="20" rx="4" fill="#e4492f"/><text x="10" y="16" text-anchor="middle" font-size="17" font-weight="bold" font-style="italic" fill="#fff" font-family="Liberation Sans, sans-serif">S</text></svg>
  <div class="clk"><div style="letter-spacing:-.3px">8:29</div><div style="margin-top:2px;letter-spacing:-.3px">2021/6/8</div></div>
  <svg style="left:1757px;top:8px" width="22" height="22" viewBox="0 0 22 22"><path d="M1 1h15v11H8l-4 3.500V12H1z" fill="#f7f7f7"/><path d="M4 4.500h9M4 7.500h9" stroke="#56606c" stroke-width="1.200"/><circle cx="15.500" cy="15.500" r="6" fill="#1c7fd0" stroke="#dfeaf5" stroke-width="1"/><text x="15.500" y="19" text-anchor="middle" font-size="9.500" font-weight="bold" fill="#fff" font-family="Liberation Sans, sans-serif">1</text></svg>
</div>

</div>
</body>
</html>
